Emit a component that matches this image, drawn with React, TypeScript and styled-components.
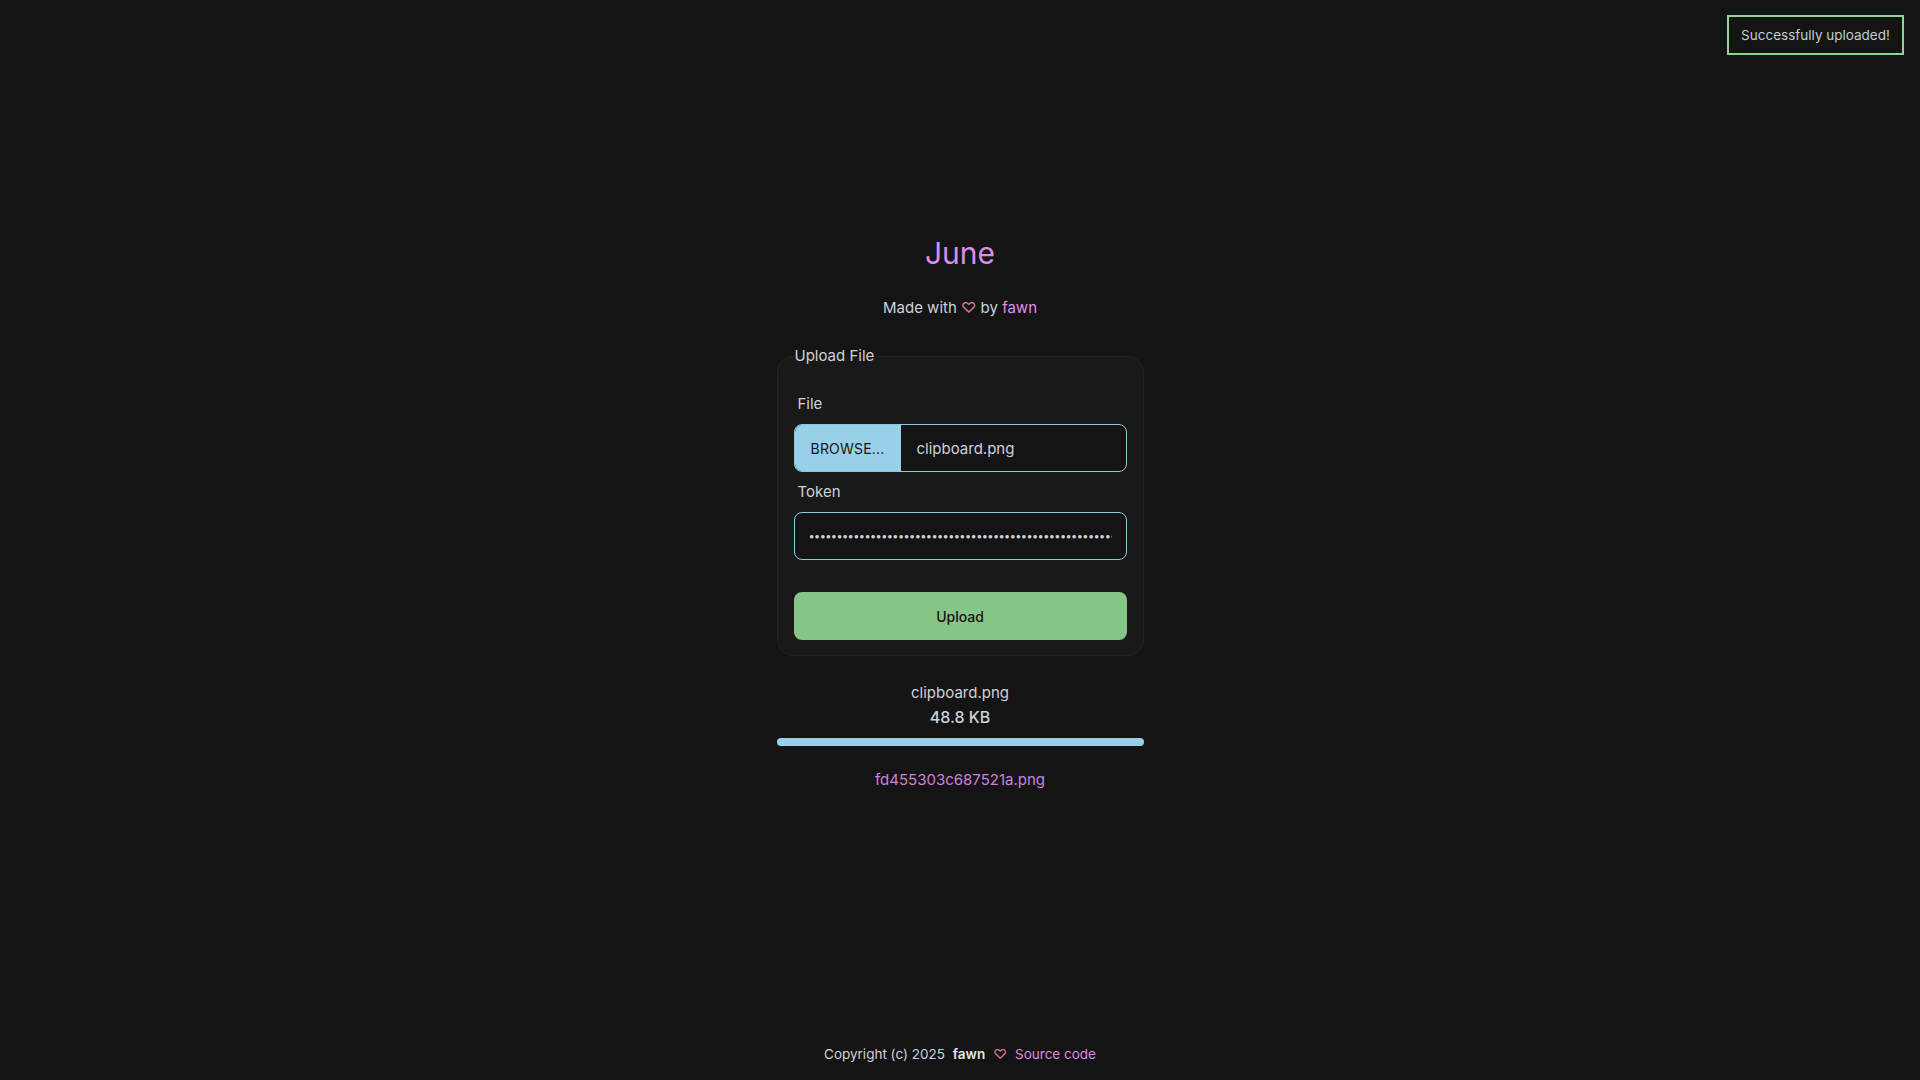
import React from "react";
import styled, { createGlobalStyle } from "styled-components";

const GlobalStyle = createGlobalStyle`
  html, body {
    margin: 0;
    padding: 0;
    background: #141414;
    color: #cdd2da;
    font-family: Inter, "Noto Sans", sans-serif;
  }
  * {
    box-sizing: border-box;
  }
`;

const Page = styled.div`
  min-height: 100vh;
  display: flex;
  flex-direction: column;
  align-items: center;
`;

const Main = styled.main`
  flex: 1;
  display: flex;
  flex-direction: column;
  align-items: center;
  padding-top: 235px;
  width: 367px;
`;

const Title = styled.h1`
  margin: 0;
  font-size: 30px;
  line-height: 36px;
  font-weight: 400;
  color: #d98ceb;
`;

const Tagline = styled.p`
  margin: 27px 0 0;
  font-size: 15px;
  line-height: 20px;
`;

const Pink = styled.a`
  color: #e08fe6;
  text-decoration: none;
`;

const Heart = styled.span`
  color: #e07f98;
`;

const Card = styled.fieldset`
  width: 367px;
  margin: 28px 0 0;
  padding: 8px 16px 15px;
  background: #191919;
  border: 1px solid #232323;
  border-radius: 16px;
  display: flex;
  flex-direction: column;
`;

const Legend = styled.legend`
  padding: 0 1px;
  margin-left: 0;
  font-size: 15px;
  line-height: 20px;
`;

const FieldLabel = styled.label<{ $top?: number }>`
  display: block;
  margin: ${(p) => p.$top ?? 20}px 0 10px 4px;
  font-size: 15px;
  line-height: 20px;
`;

const FileRow = styled.div`
  display: flex;
  height: 48px;
  border: 1px solid #8ec9e2;
  border-radius: 8px;
  overflow: hidden;
  background: #141414;
`;

const Browse = styled.span`
  width: 106px;
  background: #98d0ea;
  color: #161616;
  font-size: 14px;
  display: flex;
  align-items: center;
  justify-content: center;
  letter-spacing: 0.2px;
`;

const FileName = styled.span`
  display: flex;
  align-items: center;
  padding-left: 16px;
  font-size: 15px;
`;

const TokenInput = styled.input`
  height: 48px;
  width: 100%;
  border: 1px solid #8ec9e2;
  border-radius: 8px;
  background: #141414;
  color: #cdd2da;
  padding: 0 14px;
  font-family: Inter, sans-serif;
  font-size: 11px;
  letter-spacing: -0.6px;
  outline: none;
`;

const UploadButton = styled.button`
  margin-top: 32px;
  height: 48px;
  border: none;
  border-radius: 8px;
  background: #86c487;
  color: #151515;
  font-family: Inter, sans-serif;
  font-size: 14px;
  font-weight: 500;
`;

const Result = styled.div`
  margin-top: 27px;
  width: 100%;
  display: flex;
  flex-direction: column;
  align-items: center;
`;

const ResultLine = styled.div<{ $strong?: boolean }>`
  font-size: ${(p) => (p.$strong ? 16 : 15)}px;
  font-weight: ${(p) => (p.$strong ? 500 : 400)};
  line-height: 20px;
  & + & {
    margin-top: 4px;
  }
`;

const Progress = styled.div`
  margin-top: 11px;
  width: 100%;
  height: 8px;
  border-radius: 4px;
  background: #98d0ea;
`;

const ResultLink = styled.a`
  margin-top: 24px;
  font-size: 15px;
  line-height: 20px;
  color: #cf80dc;
  text-decoration: none;
`;

const Footer = styled.footer`
  padding-bottom: 16px;
  font-size: 13.5px;
  line-height: 20px;
  display: flex;
  gap: 8px;
  align-items: center;
`;

const FooterName = styled.span`
  color: #e6e6e6;
  font-weight: 600;
`;

const SourceLink = styled.a`
  color: #e08ad6;
  text-decoration: none;
`;

const Toast = styled.div`
  position: fixed;
  top: 15px;
  right: 16px;
  width: 177px;
  height: 40px;
  border: 2px solid #8fd694;
  background: #141414;
  color: #c3cbd6;
  font-size: 13.5px;
  display: flex;
  align-items: center;
  justify-content: center;
`;

export default function App() {
  return (
    <Page>
      <GlobalStyle />
      <Toast>Successfully uploaded!</Toast>
      <Main>
        <Title>June</Title>
        <Tagline>
          Made with <Heart>♡</Heart> by <Pink href="#">fawn</Pink>
        </Tagline>
        <Card>
          <Legend>Upload File</Legend>
          <FieldLabel>File</FieldLabel>
          <FileRow>
            <Browse>BROWSE...</Browse>
            <FileName>clipboard.png</FileName>
          </FileRow>
          <FieldLabel $top={10}>Token</FieldLabel>
          <TokenInput
            type="password"
            readOnly
            value={"x".repeat(90)}
          />
          <UploadButton>Upload</UploadButton>
        </Card>
        <Result>
          <ResultLine>clipboard.png</ResultLine>
          <ResultLine $strong>48.8 KB</ResultLine>
          <Progress />
          <ResultLink href="#">fd455303c687521a.png</ResultLink>
        </Result>
      </Main>
      <Footer>
        <span>Copyright (c) 2025</span>
        <FooterName>fawn</FooterName>
        <Heart>♡</Heart>
        <SourceLink href="#">Source code</SourceLink>
      </Footer>
    </Page>
  );
}
